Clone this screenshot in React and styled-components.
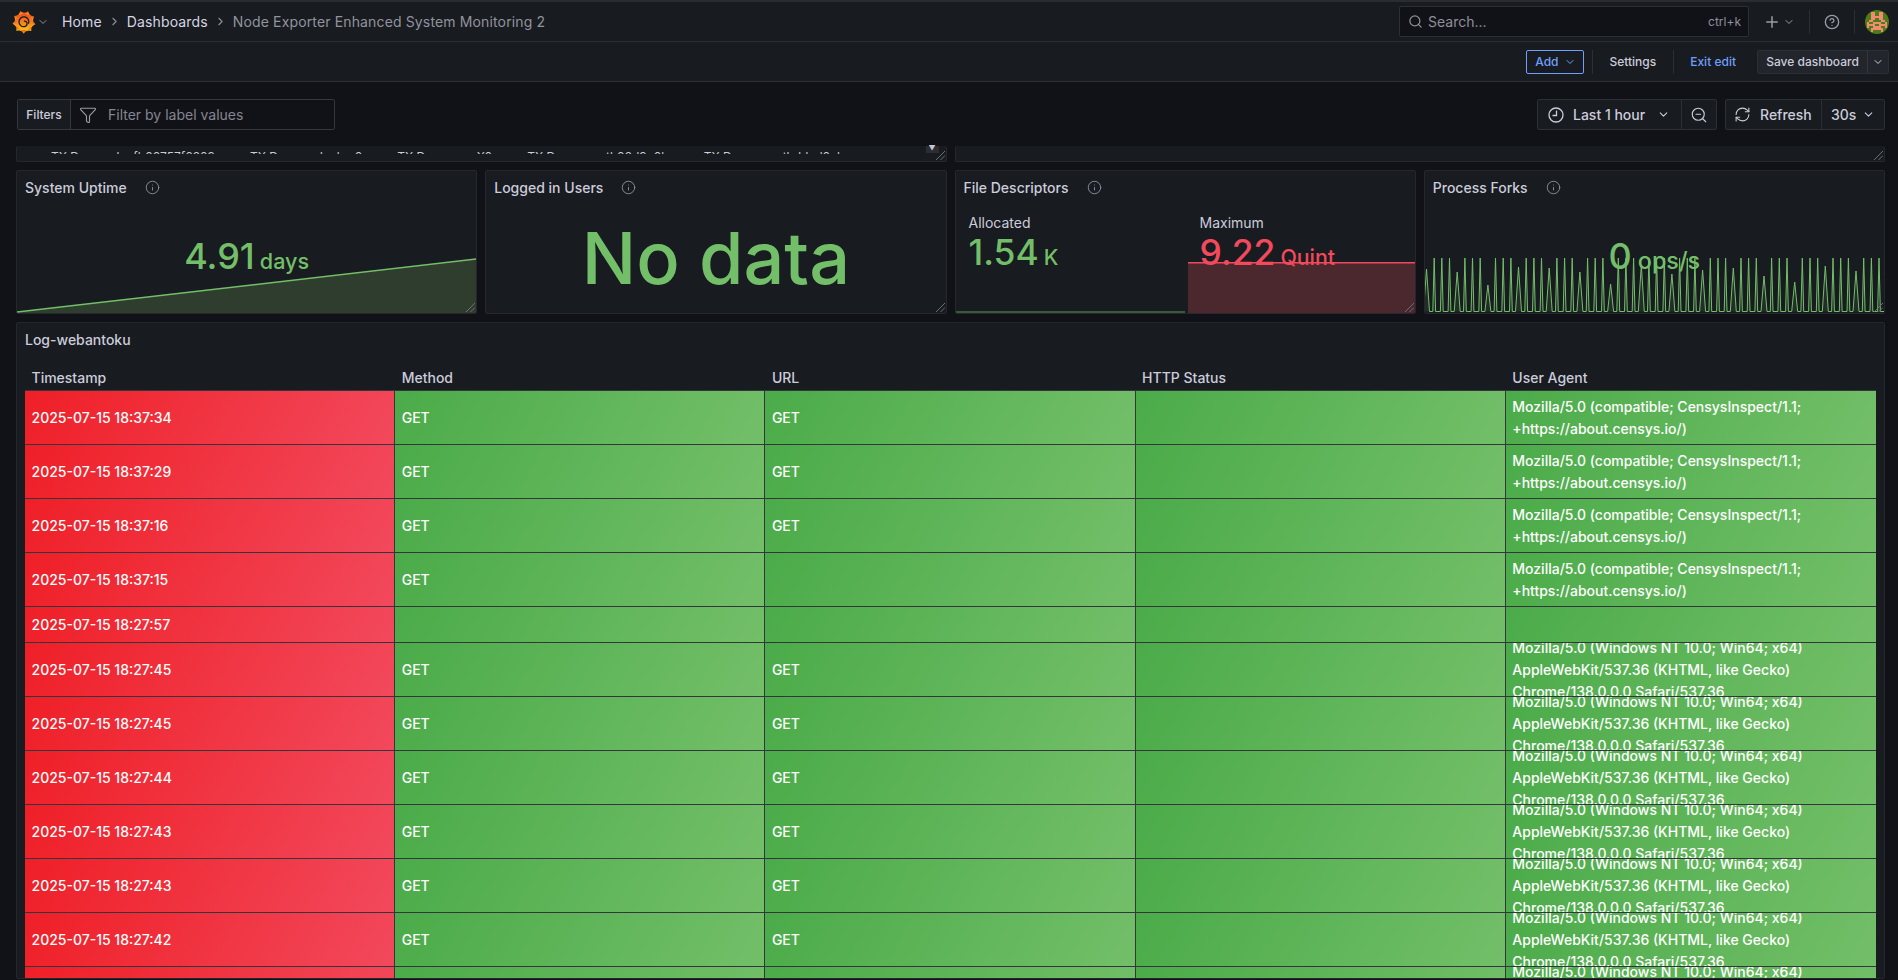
import React from 'react';
import styled, { createGlobalStyle } from 'styled-components';
import {
  ChevronDown,
  ChevronRight,
  CircleHelp,
  Funnel,
  Info,
  Plus,
  RefreshCw,
  Search,
  ZoomOut,
} from 'lucide-react';

const GlobalStyle = createGlobalStyle`
  html, body {
    margin: 0;
    height: 100%;
    background: #111217;
    overflow: hidden;
  }
  * { box-sizing: border-box; }
`;

const Page = styled.div`
  height: 979px;
  overflow: hidden;
  display: flex;
  flex-direction: column;
  border-top: 2px solid #2b2c30;
  font-family: Inter, 'Noto Sans', sans-serif;
  font-size: 14px;
  color: #ccccdc;
`;

const TopBar = styled.header`
  height: 40px;
  flex: none;
  display: flex;
  align-items: center;
  padding: 0 9px 0 12px;
  background: #181b1f;
  border-bottom: 1px solid #2c2f35;
`;

const LogoChevron = styled(ChevronDown)`
  margin-left: 1px;
  color: #8e8f9b;
`;

const Crumbs = styled.nav`
  display: flex;
  align-items: center;
  margin-left: 13px;
`;

const Crumb = styled.span`
  color: ${(p) => (p.$current ? '#92939f' : '#d5d6e2')};
  letter-spacing: 0.14px;
  white-space: nowrap;
`;

const CrumbArrow = styled.span`
  display: flex;
  width: 25px;
  justify-content: center;
  color: #8e8f9b;
`;

const SearchBox = styled.div`
  margin-left: auto;
  width: 350px;
  height: 31px;
  display: flex;
  align-items: center;
  gap: 5px;
  padding: 0 7px 0 8px;
  background: #111217;
  border: 1px solid #2c2f35;
  border-radius: 2px;
  color: #8e8f9b;
`;

const Shortcut = styled.span`
  margin-left: auto;
  font-size: 12px;
`;

const NavIcons = styled.div`
  display: flex;
  align-items: center;
  color: #9a9ba6;
`;

const PlusIcon = styled(Plus)`
  margin-left: 14px;
`;

const PlusChevron = styled(ChevronDown)`
  margin: 0 14px 0 2px;
`;

const HelpIcon = styled(CircleHelp)`
  margin: 0 14px;
`;

const NavDivider = styled.span`
  width: 1px;
  height: 24px;
  background: #2c2f35;
`;

const SubBar = styled.div`
  height: 40px;
  flex: none;
  display: flex;
  align-items: center;
  justify-content: flex-end;
  padding: 0 9px 0 0;
  background: #181b1f;
  border-bottom: 1px solid #2c2f35;
  font-size: 12px;
  font-weight: 500;
`;

const AddButton = styled.button`
  height: 24px;
  width: 58px;
  display: flex;
  align-items: center;
  justify-content: center;
  gap: 5px;
  padding: 0;
  background: transparent;
  border: 1px solid #6e9fff;
  border-radius: 2px;
  color: #6e9fff;
  font: inherit;
`;

const BarDivider = styled.span`
  width: 1px;
  height: 24px;
  margin: ${(p) => p.$margin};
  background: #2c2f35;
`;

const BarLink = styled.span`
  color: ${(p) => (p.$accent ? '#6e9fff' : '#ccccdc')};
`;

const SaveGroup = styled.div`
  display: flex;
  height: 24px;
  margin-left: 21px;
  background: #22252b;
  border: 1px solid #2c2f35;
  border-radius: 2px;
`;

const SaveButton = styled.span`
  display: flex;
  align-items: center;
  justify-content: center;
  width: ${(p) => p.$width}px;
  color: #ccccdc;
  & + & { border-left: 1px solid #34373d; }
`;

const Toolbar = styled.div`
  flex: none;
  display: flex;
  align-items: center;
  height: 31px;
  margin: 17px 13px 17px 17px;
`;

const FilterBox = styled.div`
  width: 318px;
  height: 31px;
  display: flex;
  align-items: center;
  background: #111217;
  border: 1px solid #34373d;
  border-radius: 2px;
  color: #84858f;
`;

const FilterLabel = styled.span`
  height: 100%;
  width: 53px;
  display: flex;
  align-items: center;
  justify-content: center;
  background: #181b1f;
  border-right: 1px solid #34373d;
  color: #ccccdc;
  font-size: 12px;
  font-weight: 500;
`;

const FilterIcon = styled.span`
  display: flex;
  margin: 0 11px 0 8px;
  color: #9a9ba6;
`;

const PickerGroup = styled.div`
  display: flex;
  height: 31px;
  margin-left: ${(p) => p.$offset || 0}px;
  background: #181b1f;
  border: 1px solid #2c2f35;
  border-radius: 2px;
`;

const PickerPart = styled.span`
  display: flex;
  align-items: center;
  width: ${(p) => p.$width}px;
  padding-left: ${(p) => p.$pad || 0}px;
  font-weight: 500;
  color: #ccccdc;
  & + & { border-left: 1px solid #2c2f35; }
`;

const PickerChevron = styled(ChevronDown)`
  margin-left: ${(p) => p.$gap || 0}px;
`;

const Spacer = styled.div`
  flex: 1;
`;

const PartLabel = styled.span`
  margin: ${(p) => p.$margin};
  white-space: nowrap;
`;

const Board = styled.main`
  flex: 1;
  min-height: 0;
  display: flex;
  flex-direction: column;
  gap: 8px;
  padding: 0 13px 0 16px;
`;

const TopRow = styled.div`
  display: grid;
  grid-template-columns: 1fr 1fr;
  gap: 8px;
  margin-top: -1px;
`;

const Panel = styled.section`
  position: relative;
  min-width: 0;
  background: #181b1f;
  border: 1px solid #25272c;
  border-radius: 2px;
`;

const ClippedPanel = styled(Panel)`
  height: 16px;
  border-top: none;
  display: flex;
  justify-content: space-between;
`;

const Legend = styled.div`
  height: 8px;
  overflow: hidden;
  display: flex;
  gap: 35px;
  padding: 3px 0 0 34px;
  font-size: 12px;
  line-height: 16px;
  color: #ccccdc;
  white-space: nowrap;
`;

const ScrollThumb = styled.span`
  position: absolute;
  top: 0;
  right: 7px;
  width: 13px;
  height: 7px;
  display: flex;
  justify-content: center;
  background: #2b2d33;
  color: #c8c8d0;
  font-size: 7px;
  line-height: 6px;
`;

const StatRow = styled.div`
  display: grid;
  grid-template-columns: repeat(4, 1fr);
  gap: 8px;
  height: 144px;
  flex: none;
`;

const StatPanel = styled(Panel)`
  display: flex;
  flex-direction: column;
  overflow: hidden;
`;

const PanelTitle = styled.h2`
  flex: none;
  height: 33px;
  margin: 0;
  padding: 0 8px;
  display: flex;
  align-items: center;
  gap: 18px;
  font-size: 14px;
  font-weight: 500;
  color: #ccccdc;

  svg { color: #8e8f9b; flex: none; }
`;

const LogTitle = styled(PanelTitle)`
  padding: 0;
`;

const StatBody = styled.div`
  position: relative;
  flex: 1;
  min-height: 0;
  display: flex;
  align-items: center;
  justify-content: center;
`;

const StatValue = styled.div`
  position: relative;
  z-index: 1;
  display: flex;
  align-items: baseline;
  gap: ${(p) => p.$gap ?? 6}px;
  font-size: ${(p) => p.$size || 36}px;
  font-weight: 500;
  line-height: 42px;
  color: ${(p) => (p.$red ? '#f2495c' : '#73bf69')};
  white-space: nowrap;
`;

const Unit = styled.span`
  font-size: ${(p) => p.$ratio || 0.6}em;
`;

const NoData = styled.div`
  font-size: 72px;
  line-height: 1;
  font-weight: 500;
  color: #73bf69;
  margin-top: -2px;
`;

const Chart = styled.svg`
  position: absolute;
  left: 0;
  bottom: 0;
  display: block;
`;

const SplitBody = styled.div`
  flex: 1;
  display: grid;
  grid-template-columns: 229px 1fr;
  gap: 3px;
`;

const Split = styled.div`
  position: relative;
  padding: 10px 0 0 ${(p) => p.$pad}px;
  overflow: hidden;
`;

const SplitLabel = styled.div`
  font-size: 14px;
  line-height: 18px;
  color: #ccccdc;
`;

const Resize = styled.svg`
  position: absolute;
  right: 1px;
  bottom: 1px;
  z-index: 2;
  display: block;
  color: #6c6e76;
`;

const LogPanel = styled(Panel)`
  flex: 1;
  min-height: 0;
  padding: 0 8px;
  overflow: hidden;
`;

const Grid = styled.div`
  display: grid;
  grid-template-columns: repeat(5, 1fr);
`;

const HeadRow = styled(Grid)`
  height: 35px;
  padding-top: 8px;
  border-bottom: 1px solid #34353d;
  font-weight: 500;
  color: #ccccdc;
`;

const HeadCell = styled.div`
  padding: 0 6.5px;
  display: flex;
  align-items: center;
`;

const Row = styled(Grid)`
  height: ${(p) => (p.$short ? 36 : 54)}px;
  border-bottom: 1px solid #34353d;
`;

const Cell = styled.div`
  display: flex;
  align-items: center;
  min-width: 0;
  overflow: hidden;
  padding: 0 6.5px;
  border-right: 1px solid #34353d;
  background: ${(p) =>
    p.$tone === 'red'
      ? 'linear-gradient(120deg, #ef1f27, #f2495c)'
      : 'linear-gradient(120deg, #4bab49, #73bf69)'};
  color: #fff;
  font-weight: 500;
  line-height: 22px;

  &:last-child { border-right: none; }
`;

const CellText = styled.div`
  width: 100%;
`;

const AvatarFrame = styled.svg`
  margin-left: 10px;
`;

const CENSYS = 'Mozilla/5.0 (compatible; CensysInspect/1.1; +https://about.censys.io/)';
const CHROME =
  'Mozilla/5.0 (Windows NT 10.0; Win64; x64) AppleWebKit/537.36 (KHTML, like Gecko) Chrome/138.0.0.0 Safari/537.36';

const LOGS = [
  { time: '2025-07-15 18:37:34', method: 'GET', url: 'GET', agent: CENSYS },
  { time: '2025-07-15 18:37:29', method: 'GET', url: 'GET', agent: CENSYS },
  { time: '2025-07-15 18:37:16', method: 'GET', url: 'GET', agent: CENSYS },
  { time: '2025-07-15 18:37:15', method: 'GET', url: '', agent: CENSYS },
  { time: '2025-07-15 18:27:57', method: '', url: '', agent: '', short: true },
  { time: '2025-07-15 18:27:45', method: 'GET', url: 'GET', agent: CHROME },
  { time: '2025-07-15 18:27:45', method: 'GET', url: 'GET', agent: CHROME },
  { time: '2025-07-15 18:27:44', method: 'GET', url: 'GET', agent: CHROME },
  { time: '2025-07-15 18:27:43', method: 'GET', url: 'GET', agent: CHROME },
  { time: '2025-07-15 18:27:43', method: 'GET', url: 'GET', agent: CHROME },
  { time: '2025-07-15 18:27:42', method: 'GET', url: 'GET', agent: CHROME },
  { time: '2025-07-15 18:27:42', method: 'GET', url: 'GET', agent: CHROME },
];

const LEGEND = ['br-fb00757f6209', 'docker0', 'enX0', 'veth02d9e0b', 'vethddcd0cb'];

// short spikes land on every 4th sample, the rest reach the top
const SHORT_SPIKES = [43, 40, 27, 45, 44, 40, 28, 47, 38, 42, 44, 36, 30, 46, 41];

function forksPath() {
  let line = 'M0 53.5';
  for (let i = 0; i < 60; i++) {
    const x = 1.5 + i * 7.67;
    const isShort = i % 4 === 0;
    const h = isShort ? SHORT_SPIKES[(i / 4) % SHORT_SPIKES.length] : 54;
    const half = isShort ? 3 : 1.4;
    line += ` L${(x - half).toFixed(1)} 53.5 L${x.toFixed(1)} ${(54 - h).toFixed(1)} L${(x + half).toFixed(1)} 53.5`;
  }
  return { line: `${line} L461 53.5`, area: `${line} L461 53.5 Z` };
}

const FORKS = forksPath();

function GrafanaLogo() {
  const teeth = [];
  for (let i = 0; i < 9; i++) {
    const a = (i / 9) * Math.PI * 2 - 0.5;
    const tip = [12 + 11.6 * Math.cos(a), 12 + 11.6 * Math.sin(a)];
    const l = [12 + 8.8 * Math.cos(a - 0.34), 12 + 8.8 * Math.sin(a - 0.34)];
    const r = [12 + 8.8 * Math.cos(a + 0.34), 12 + 8.8 * Math.sin(a + 0.34)];
    teeth.push(`${l.join(',')} ${tip.join(',')} ${r.join(',')}`);
  }
  return (
    <svg width="24" height="24" viewBox="0 0 24 24">
      <defs>
        <linearGradient id="logo" x1="0" y1="0" x2="0" y2="1">
          <stop offset="0" stopColor="#ee4a22" />
          <stop offset="0.6" stopColor="#f5891f" />
          <stop offset="1" stopColor="#fbca0a" />
        </linearGradient>
      </defs>
      <g fill="url(#logo)">
        <circle cx="12" cy="12" r="9.4" />
        {teeth.map((t) => (
          <polygon key={t} points={t} />
        ))}
      </g>
      <path
        d="M16.6 13.2a4.9 4.9 0 1 0-4.3 3.5 3.2 3.2 0 0 0 2.8-3.3 2.4 2.4 0 0 0-2.6-2.2"
        fill="none"
        stroke="#181b1f"
        strokeWidth="1.3"
        strokeLinecap="round"
      />
    </svg>
  );
}

const AVATAR_ROWS = [
  '000000',
  '000110',
  '000110',
  '000111',
  '000110',
  '001100',
  '010011',
  '011110',
  '010011',
  '000111',
  '000100',
  '000000',
];

function Avatar() {
  return (
    <AvatarFrame width="24" height="24" viewBox="0 0 24 24">
      <defs>
        <clipPath id="avatar">
          <circle cx="12" cy="12" r="12" />
        </clipPath>
      </defs>
      <g clipPath="url(#avatar)">
        <rect width="24" height="24" fill="#4e7d17" />
        {AVATAR_ROWS.flatMap((row, y) =>
          row.split('').flatMap((on, x) =>
            on === '1'
              ? [
                  <rect key={`l${x}-${y}`} x={x * 2} y={y * 2} width="2" height="2" fill="#f08a70" />,
                  <rect key={`r${x}-${y}`} x={22 - x * 2} y={y * 2} width="2" height="2" fill="#f08a70" />,
                ]
              : []
          )
        )}
      </g>
    </AvatarFrame>
  );
}

function ClockIcon() {
  return (
    <svg width="16" height="16" viewBox="0 0 16 16" fill="none" stroke="currentColor" strokeWidth="1.3">
      <circle cx="8" cy="8" r="7" />
      <path d="M8.5 3.5V8.5H4.5" />
    </svg>
  );
}

function ResizeHandle() {
  return (
    <Resize width="10" height="10" viewBox="0 0 10 10" fill="none" stroke="currentColor">
      <path d="M1 10L10 1M5.5 10L10 5.5" />
    </Resize>
  );
}

function TitleInfo() {
  return <Info size={15} strokeWidth={1.5} />;
}

function App() {
  return (
    <>
      <GlobalStyle />
      <Page>
        <TopBar>
          <GrafanaLogo />
          <LogoChevron size={12} />
          <Crumbs>
            <Crumb>Home</Crumb>
            <CrumbArrow>
              <ChevronRight size={13} />
            </CrumbArrow>
            <Crumb>Dashboards</Crumb>
            <CrumbArrow>
              <ChevronRight size={13} />
            </CrumbArrow>
            <Crumb $current>Node Exporter Enhanced System Monitoring 2</Crumb>
          </Crumbs>
          <SearchBox>
            <Search size={15} />
            <span>Search...</span>
            <Shortcut>ctrl+k</Shortcut>
          </SearchBox>
          <NavIcons>
            <PlusIcon size={18} />
            <PlusChevron size={12} />
            <NavDivider />
            <HelpIcon size={16} />
            <NavDivider />
            <Avatar />
          </NavIcons>
        </TopBar>

        <SubBar>
          <AddButton>
            Add
            <ChevronDown size={12} />
          </AddButton>
          <BarDivider $margin="0 16px 0 8px" />
          <BarLink>Settings</BarLink>
          <BarDivider $margin="0 16px 0 17px" />
          <BarLink $accent>Exit edit</BarLink>
          <SaveGroup>
            <SaveButton $width={109}>Save dashboard</SaveButton>
            <SaveButton $width={21}>
              <ChevronDown size={12} />
            </SaveButton>
          </SaveGroup>
        </SubBar>

        <Toolbar>
          <FilterBox>
            <FilterLabel>Filters</FilterLabel>
            <FilterIcon>
              <Funnel size={18} strokeWidth={1.5} />
            </FilterIcon>
            <span>Filter by label values</span>
          </FilterBox>
          <Spacer />
          <PickerGroup>
            <PickerPart $width={143} $pad={10}>
              <ClockIcon />
              <PartLabel $margin="0 0 0 9px">Last 1 hour</PartLabel>
              <PickerChevron size={13} $gap={12} />
            </PickerPart>
            <PickerPart $width={35} $pad={8}>
              <ZoomOut size={18} strokeWidth={1.5} />
            </PickerPart>
          </PickerGroup>
          <PickerGroup $offset={8}>
            <PickerPart $width={95} $pad={8}>
              <RefreshCw size={17} strokeWidth={1.5} />
              <PartLabel $margin="0 0 0 9px">Refresh</PartLabel>
            </PickerPart>
            <PickerPart $width={63} $pad={9}>
              <PartLabel $margin="0 6px 0 0">30s</PartLabel>
              <PickerChevron size={13} />
            </PickerPart>
          </PickerGroup>
        </Toolbar>

        <Board>
          <TopRow>
            <ClippedPanel>
              <Legend>
                {LEGEND.map((name) => (
                  <span key={name}>TX Drops - {name}</span>
                ))}
              </Legend>
              <ScrollThumb>▼</ScrollThumb>
              <ResizeHandle />
            </ClippedPanel>
            <ClippedPanel>
              <ResizeHandle />
            </ClippedPanel>
          </TopRow>

          <StatRow>
            <StatPanel>
              <PanelTitle>
                System Uptime
                <TitleInfo />
              </PanelTitle>
              <StatBody>
                <Chart width="460" height="55" viewBox="0 0 460 55" preserveAspectRatio="none">
                  <path d="M0 54L460 1V55H0Z" fill="#2e3d2e" />
                  <path d="M0 54L460 1" stroke="#73bf69" strokeWidth="1.5" fill="none" />
                </Chart>
                <StatValue $gap={5}>
                  4.91<Unit>days</Unit>
                </StatValue>
              </StatBody>
              <ResizeHandle />
            </StatPanel>

            <StatPanel>
              <PanelTitle>
                Logged in Users
                <TitleInfo />
              </PanelTitle>
              <StatBody>
                <NoData>No data</NoData>
              </StatBody>
              <ResizeHandle />
            </StatPanel>

            <StatPanel>
              <PanelTitle>
                File Descriptors
                <TitleInfo />
              </PanelTitle>
              <SplitBody>
                <Split $pad={13}>
                  <SplitLabel>Allocated</SplitLabel>
                  <StatValue $gap={5} $size={35.5}>
                    1.54<Unit>K</Unit>
                  </StatValue>
                  <Chart width="229" height="2" viewBox="0 0 229 2">
                    <path d="M0 1H229" stroke="#5a9a52" strokeWidth="1" />
                  </Chart>
                </Split>
                <Split $pad={12}>
                  <SplitLabel>Maximum</SplitLabel>
                  <StatValue $red $gap={5} $size={35.5}>
                    9.22<Unit>Quint</Unit>
                  </StatValue>
                  <Chart width="230" height="51" viewBox="0 0 230 51">
                    <rect y="0.5" width="230" height="51" fill="#4a282e" />
                    <path d="M0 0.75H230" stroke="#f2495c" strokeWidth="1.5" />
                  </Chart>
                </Split>
              </SplitBody>
              <ResizeHandle />
            </StatPanel>

            <StatPanel>
              <PanelTitle>
                Process Forks
                <TitleInfo />
              </PanelTitle>
              <StatBody>
                <Chart width="461" height="55" viewBox="0 0 461 55">
                  <path d={FORKS.area} fill="#73bf69" fillOpacity="0.12" />
                  <path d={FORKS.line} fill="none" stroke="#73bf69" strokeWidth="1" />
                </Chart>
                <StatValue $gap={6}>
                  0<Unit $ratio={0.65}>ops/s</Unit>
                </StatValue>
              </StatBody>
              <ResizeHandle />
            </StatPanel>
          </StatRow>

          <LogPanel>
            <LogTitle>Log-webantoku</LogTitle>
            <HeadRow>
              {['Timestamp', 'Method', 'URL', 'HTTP Status', 'User Agent'].map((h) => (
                <HeadCell key={h}>{h}</HeadCell>
              ))}
            </HeadRow>
            {LOGS.map((log, i) => (
              <Row key={i} $short={log.short}>
                <Cell $tone="red">{log.time}</Cell>
                <Cell>{log.method}</Cell>
                <Cell>{log.url}</Cell>
                <Cell />
                <Cell>
                  <CellText>{log.agent}</CellText>
                </Cell>
              </Row>
            ))}
          </LogPanel>
        </Board>
      </Page>
    </>
  );
}

export default App;
